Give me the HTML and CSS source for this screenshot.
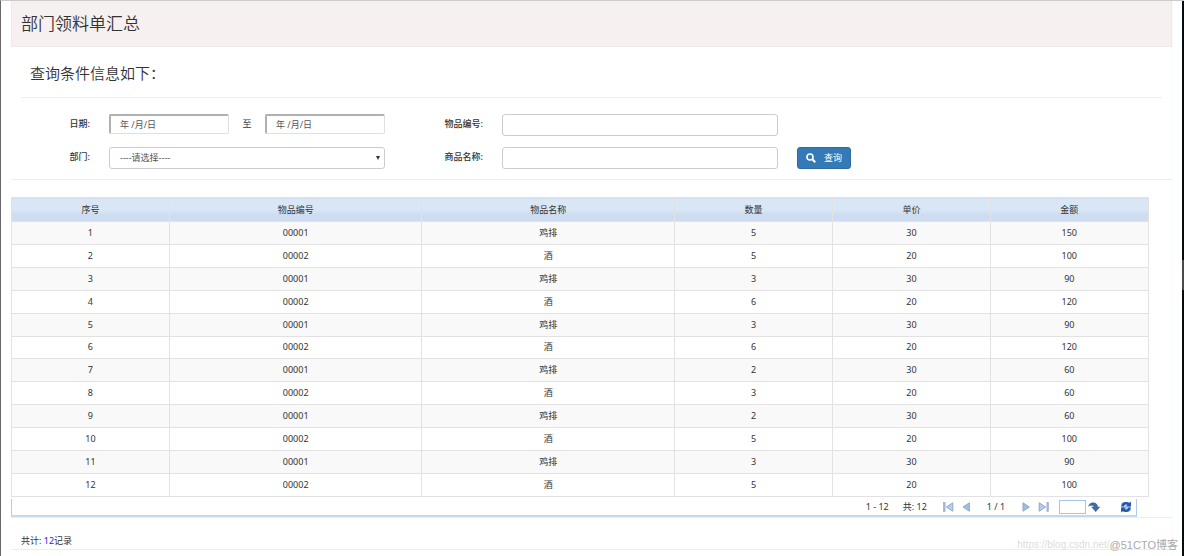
FILE: index.html
```html
<!DOCTYPE html>
<html lang="zh-CN">
<head>
<meta charset="utf-8">
<title>部门领料单汇总</title>
<link rel="stylesheet" href="styles.css">
</head>
<body>
<div class="window">
  <main class="panel">
    <header class="panel-head"><h1>部门领料单汇总</h1></header>

    <form class="query">
      <h2>查询条件信息如下：</h2>
      <div class="fields">
        <label for="from">日期:</label>
        <div class="range">
          <input class="date" id="from" type="text" value="年 /月/日">
          <label class="to" for="until">至</label>
          <input class="date" id="until" type="text" value="年 /月/日">
        </div>
        <label for="code">物品编号:</label>
        <input class="control" id="code" type="text">
        <span></span>
        <label for="dept">部门:</label>
        <div class="select-box">
          <select class="control" id="dept"><option>----请选择----</option></select>
        </div>
        <label for="name">商品名称:</label>
        <input class="control" id="name" type="text">
        <button class="search" type="button">
          <svg width="10" height="10" viewBox="0 0 10 10" fill="none" stroke="currentColor"><circle cx="4" cy="4" r="3" stroke-width="1.6"/><path d="M6.3 6.3L9.2 9.2" stroke-width="2"/></svg>
          查询
        </button>
      </div>
    </form>

    <section class="results">
      <table>
        <colgroup><col class="c-s"><col class="c-l"><col class="c-l"><col class="c-s"><col class="c-s"><col class="c-s"></colgroup>
        <thead><tr><th>序号</th><th>物品编号</th><th>物品名称</th><th>数量</th><th>单价</th><th>金额</th></tr></thead>
        <tbody>
          <tr><td>1</td><td>00001</td><td>鸡排</td><td>5</td><td>30</td><td>150</td></tr>
          <tr><td>2</td><td>00002</td><td>酒</td><td>5</td><td>20</td><td>100</td></tr>
          <tr><td>3</td><td>00001</td><td>鸡排</td><td>3</td><td>30</td><td>90</td></tr>
          <tr><td>4</td><td>00002</td><td>酒</td><td>6</td><td>20</td><td>120</td></tr>
          <tr><td>5</td><td>00001</td><td>鸡排</td><td>3</td><td>30</td><td>90</td></tr>
          <tr><td>6</td><td>00002</td><td>酒</td><td>6</td><td>20</td><td>120</td></tr>
          <tr><td>7</td><td>00001</td><td>鸡排</td><td>2</td><td>30</td><td>60</td></tr>
          <tr><td>8</td><td>00002</td><td>酒</td><td>3</td><td>20</td><td>60</td></tr>
          <tr><td>9</td><td>00001</td><td>鸡排</td><td>2</td><td>30</td><td>60</td></tr>
          <tr><td>10</td><td>00002</td><td>酒</td><td>5</td><td>20</td><td>100</td></tr>
          <tr><td>11</td><td>00001</td><td>鸡排</td><td>3</td><td>30</td><td>90</td></tr>
          <tr><td>12</td><td>00002</td><td>酒</td><td>5</td><td>20</td><td>100</td></tr>
        </tbody>
      </table>

      <nav class="pager" aria-label="分页">
        <span>1 - 12</span>
        <span>共: 12</span>
        <div class="pair">
          <button type="button" aria-label="首页"><svg width="11" height="10" viewBox="0 0 11 10"><rect x=".5" y=".5" width="1.6" height="9" fill="#a9bcd8" stroke="#8fa9cd" stroke-width=".6"/><path d="M9.8 .8V9.2L3.4 5z" fill="#b9cdea" stroke="#8aa8d0"/></svg></button>
          <button type="button" aria-label="上一页"><svg width="10" height="10" viewBox="0 0 10 10"><path d="M8.4 .8V9.2L2 5z" fill="#a3bde0" stroke="#8aa8d0"/></svg></button>
        </div>
        <span>1 / 1</span>
        <div class="pair">
          <button type="button" aria-label="下一页"><svg width="10" height="10" viewBox="0 0 10 10"><path d="M2 .8V9.2L8.4 5z" fill="#a3bde0" stroke="#8aa8d0"/></svg></button>
          <button type="button" aria-label="末页"><svg width="11" height="10" viewBox="0 0 11 10"><path d="M1.2 .8V9.2L7.6 5z" fill="#b9cdea" stroke="#8aa8d0"/><rect x="8.9" y=".5" width="1.6" height="9" fill="#a9bcd8" stroke="#8fa9cd" stroke-width=".6"/></svg></button>
        </div>
        <div class="jump">
          <input type="text" aria-label="页码">
          <button type="button" aria-label="跳转"><svg width="12" height="10" viewBox="0 0 12 10"><path d="M.5 4.200C1.200 1.300 3.600 .3 6 .8 8.400 1.300 9.700 3 9.700 5H11.800L7.700 9.700 3.600 5H5.900C5.800 4.100 5 3.600 3.600 3.600 2.400 3.600 1.300 3.700 .5 4.200z" fill="#3f6ba5" stroke="#2d5791" stroke-width=".4"/></svg></button>
        </div>
        <button class="refresh" type="button" aria-label="刷新"><svg width="12" height="12" viewBox="0 0 12 12"><rect x="1" y="1" width="10" height="10" rx="2" fill="#c3d4ea"/><path d="M1.300 5.400C1.400 2.400 3.600 1 6 1c1.300 0 2.300.4 3.100 1.100L10.900 .5v5H5.900l1.600-1.600C6.400 3.100 4.400 3.300 3.900 5.400zM10.700 6.600C10.600 9.600 8.400 11 6 11c-1.300 0-2.300-.4-3.100-1.100L1.100 11.500v-5h5L4.500 8.100c1.100.8 3.100.6 3.600-1.500z" fill="#1f57a6"/></svg></button>
      </nav>
    </section>

    <footer class="total">共计: <span class="count">12</span>记录</footer>
  </main>
  <div class="edge"><div class="thumb"></div></div>
</div>
<div class="marks"><span class="mark-url">https://blog.csdn.net/</span><span class="mark-site">@51CTO博客</span></div>
</body>
</html>
```
FILE: styles.css
```css
* { box-sizing: border-box; }
body {
  margin: 0;
  background: #fff;
  color: #333;
  font: 9px/16px "Noto Sans", "Noto Sans CJK SC", sans-serif;
}
input, select, button { font: inherit; color: inherit; margin: 0; }
button { border: 0; padding: 0; background: none; }
svg { display: block; }

.window {
  display: flex;
  min-height: 100vh;
  border-top: 1px solid #cbcacc;
  border-left: 1px solid #69676a;
}
.panel {
  flex: 1;
  margin: 0 9px 0 10px;
  border-right: 1px solid #fafafa;
}
.edge { width: 2px; background: #030d0e; padding-top: 259px; }
.thumb { height: 30px; background: #4a4a4a; }

.panel-head {
  padding: 10px 9px;
  background: #f6f0f0;
  border: 1px solid #efe9e9;
  border-top: 0;
}
h1 {
  margin: 0;
  font-size: 17px;
  line-height: 25px;
  font-weight: 350;
}

.query { border-bottom: 1px solid #eee; padding-bottom: 10px; }
h2 {
  margin: 0 10px 16px;
  padding: 14px 9px 12px;
  border-bottom: 1px solid #eee;
  font-size: 15px;
  line-height: 24px;
  font-weight: 350;
}
.fields {
  display: grid;
  grid-template-columns: 79fr 276fr 79fr 276fr 375fr;
  gap: 11px 19px;
}
.fields label { text-align: right; font-weight: 500; line-height: 20px; }
.range { display: flex; justify-content: space-between; align-items: flex-start; }
.fields .to { font-weight: 400; }
.date {
  width: 120px;
  height: 20px;
  padding: 0 9px;
  border: 1px solid #e0e0e0;
  border-top: 2px solid #b0b0b0;
  border-left: 2px solid #b0b0b0;
  border-radius: 2px;
  background: #fff;
  color: #555;
}
.control {
  display: block;
  width: 100%;
  height: 22px;
  padding: 0 10px;
  border: 1px solid #ccc;
  border-radius: 3px;
  background: #fff;
  color: #555;
}
.select-box { position: relative; }
select.control { appearance: none; }
.select-box::after {
  content: "";
  position: absolute;
  top: 9px;
  right: 5px;
  border: 2px solid transparent;
  border-top: 4px solid #333;
  border-bottom: 0;
}
.search {
  justify-self: start;
  display: flex;
  align-items: center;
  gap: 8px;
  height: 22px;
  padding: 0 8px;
  border: 1px solid #2e6da4;
  border-radius: 3px;
  background: #337ab7;
  color: #fff;
}

.results { padding-top: 17px; border-bottom: 1px solid #eee; }
table {
  width: 98%;
  height: 300px;
  table-layout: fixed;
  border-collapse: collapse;
}
.c-s { width: 10%; }
.c-l { width: 16%; }
th, td {
  padding: 2px 0;
  border: 1px solid #e2e2e2;
  text-align: center;
  font-weight: 400;
}
th { height: 24px; background: linear-gradient(#d9e6f5 50%, #cddcf0 70%); }
tbody tr:nth-child(odd) { background: #f9f9f9; }

.pager {
  display: flex;
  justify-content: flex-end;
  align-items: center;
  gap: 14px;
  width: 97%;
  margin-top: 2px;
  padding-right: 4px;
  border: 1px solid #b3cbe8;
  border-top: 0;
  border-bottom: 2px solid #c9d7ec;
}
.pair { display: flex; gap: 7px; margin: 0 2px; }
.jump { display: flex; align-items: center; gap: 2px; margin-left: -6px; }
.jump input {
  width: 27px;
  height: 14px;
  padding: 0 2px;
  border: 1px solid #a3c4f0;
  background: #fff;
}
.refresh { margin-left: 6px; }

.total {
  padding: 15px 10px 0;
  border-bottom: 1px solid #eee;
}
.count { color: #22f; }

.marks {
  position: absolute;
  right: 6px;
  bottom: 3px;
  display: flex;
  align-items: center;
  font-family: "Liberation Sans", "Noto Sans CJK SC", sans-serif;
}
.mark-url { font-size: 10px; color: #ddd; }
.mark-site { font-size: 11px; color: #aaa; }
```
